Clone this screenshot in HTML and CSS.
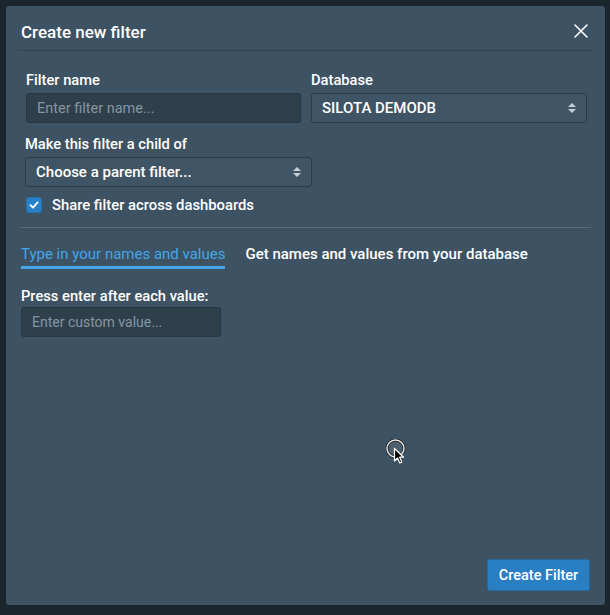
FILE: index.html
```html
<!DOCTYPE html>
<html lang="en">
<head>
    <meta charset="UTF-8">
    <meta name="viewport" content="width=device-width, initial-scale=1.0">
    <title>Create new filter</title>
    <link rel="stylesheet" href="styles.css">
</head>
<body>

<!-- Create filter modal -->
<div class="modal">
    <div class="modal-header">
        <h3>Create new filter</h3>
        <button class="close-btn" aria-label="Close">
            <svg width="14" height="14" viewBox="0 0 14 14">
                <path d="M1 1 L13 13 M13 1 L1 13" stroke="#fff" stroke-width="1.6" stroke-linecap="round"/>
            </svg>
        </button>
    </div>

    <div class="modal-body">
        <div class="form-row">
            <div class="field">
                <label>Filter name</label>
                <input type="text" class="text-input" placeholder="Enter filter name...">
            </div>
            <div class="field">
                <label>Database</label>
                <div class="select">
                    <span>SILOTA DEMODB</span>
                    <svg class="arrows" width="8" height="12" viewBox="0 0 8 12">
                        <path d="M0 5 L4 1 L8 5 Z M0 7 L4 11 L8 7 Z" fill="#c5ced6"/>
                    </svg>
                </div>
            </div>
        </div>

        <div class="field parent-field">
            <label>Make this filter a child of</label>
            <div class="select">
                <span>Choose a parent filter...</span>
                <svg class="arrows" width="8" height="12" viewBox="0 0 8 12">
                    <path d="M0 5 L4 1 L8 5 Z M0 7 L4 11 L8 7 Z" fill="#c5ced6"/>
                </svg>
            </div>
        </div>

        <div class="check-row">
            <span class="checkbox">
                <svg width="12" height="12" viewBox="0 0 12 12">
                    <path d="M2.5 6.2 L5 8.6 L9.6 3.4" stroke="#fff" stroke-width="1.8" fill="none" stroke-linecap="round" stroke-linejoin="round"/>
                </svg>
            </span>
            <span>Share filter across dashboards</span>
        </div>
    </div>

    <div class="section">
        <div class="tabs">
            <span class="tab active">Type in your names and values</span>
            <span class="tab">Get names and values from your database</span>
        </div>

        <label class="values-label">Press enter after each value:</label>
        <input type="text" class="text-input custom-input" placeholder="Enter custom value...">
    </div>

    <div class="modal-footer">
        <button class="create-btn">Create Filter</button>
    </div>
</div>

<!-- mouse pointer captured in the screenshot -->
<svg class="pointer" width="26" height="30" viewBox="0 0 26 30">
    <circle cx="9.5" cy="9.5" r="8.5" fill="rgba(255,255,255,0.08)" stroke="#222" stroke-width="3"/>
    <circle cx="9.5" cy="9.5" r="8.5" fill="none" stroke="#e8e8e8" stroke-width="1.4"/>
    <path d="M8.5 9.5 L8.5 22 L11.5 19 L13.8 24 L15.8 23 L13.6 18.2 L17.6 18.2 Z" fill="#000" stroke="#fff" stroke-width="1.2" stroke-linejoin="round"/>
</svg>

</body>
</html>
```

FILE: styles.css
```css
body {
    margin: 0;
    padding: 6px;
    background-color: #1b252c;
    font-family: Roboto, "Liberation Sans", Arial, sans-serif;
    font-weight: 500;
    color: #fff;
}

.modal {
    width: 599px;
    height: 599px;
    background-color: #3d5262;
    border-radius: 3px;
    display: flex;
    flex-direction: column;
    box-sizing: border-box;
}

.modal-header {
    height: 45px;
    margin: 0 13px 0 12px;
    padding: 0 4px 0 3px;
    border-bottom: 1px solid #33464f;
    display: flex;
    align-items: center;
    justify-content: space-between;
    box-sizing: border-box;
}

.modal-header h3 {
    margin: 0;
    padding-top: 8px;
    font-size: 17px;
    font-weight: 500;
}

.close-btn {
    background: none;
    border: none;
    padding: 0;
    margin-top: 6px;
    cursor: pointer;
    display: flex;
}

.modal-body {
    padding: 21px 18px 0 20px;
}

.form-row {
    display: flex;
    gap: 10px;
}

.field {
    display: flex;
    flex-direction: column;
}

.form-row .field:first-child {
    width: 275px;
}

.form-row .field:last-child {
    width: 276px;
}

label {
    font-size: 14.7px;
    line-height: 17px;
    margin-bottom: 4px;
}

.text-input {
    height: 30px;
    box-sizing: border-box;
    background-color: #2f404d;
    border: 1px solid #283743;
    border-radius: 3px;
    padding: 0 10px;
    font-family: inherit;
    font-size: 14.5px;
    font-weight: 400;
    color: #fff;
}

.text-input::placeholder {
    color: #8795a0;
}

.select {
    height: 30px;
    box-sizing: border-box;
    background-color: #3f5465;
    border: 1px solid #2b3b47;
    border-radius: 3px;
    padding: 0 10px;
    display: flex;
    align-items: center;
    justify-content: space-between;
    font-size: 15px;
}

.parent-field {
    width: 287px;
    margin-top: 13px;
    margin-left: -1px;
}

.check-row {
    display: flex;
    align-items: center;
    gap: 10px;
    margin-top: 10px;
    height: 16px;
    line-height: 16px;
    font-size: 14.8px;
}

.checkbox {
    width: 16px;
    height: 16px;
    box-sizing: border-box;
    background-color: #2a80c6;
    border: 1px solid #2473b3;
    border-radius: 3px;
    display: flex;
    align-items: center;
    justify-content: center;
}

.section {
    margin: 14px 14px 0 15px;
    border-top: 1px solid #5a6c79;
    flex: 1;
    display: flex;
    flex-direction: column;
    align-items: flex-start;
}

.tabs {
    display: flex;
    gap: 20px;
    margin-top: 17px;
    font-size: 15px;
}

.tab {
    padding-bottom: 3px;
    border-bottom: 3px solid transparent;
}

.tab.active {
    color: #43a6ea;
    font-weight: 400;
    border-bottom-color: #43a6ea;
}

.values-label {
    margin-top: 19px;
    margin-bottom: 2px;
}

.custom-input {
    width: 200px;
    font-size: 14px;
}

.modal-footer {
    display: flex;
    justify-content: flex-end;
    padding: 0 15px 14px 0;
}

.create-btn {
    width: 103px;
    height: 32px;
    background-color: #2a7fc2;
    border: 1px solid #24699f;
    border-radius: 3px;
    color: #fff;
    font-family: inherit;
    font-size: 14.5px;
    font-weight: 500;
    cursor: pointer;
}

.create-btn:hover {
    background-color: #256fab;
}

.pointer {
    position: absolute;
    left: 386px;
    top: 439px;
}
```
